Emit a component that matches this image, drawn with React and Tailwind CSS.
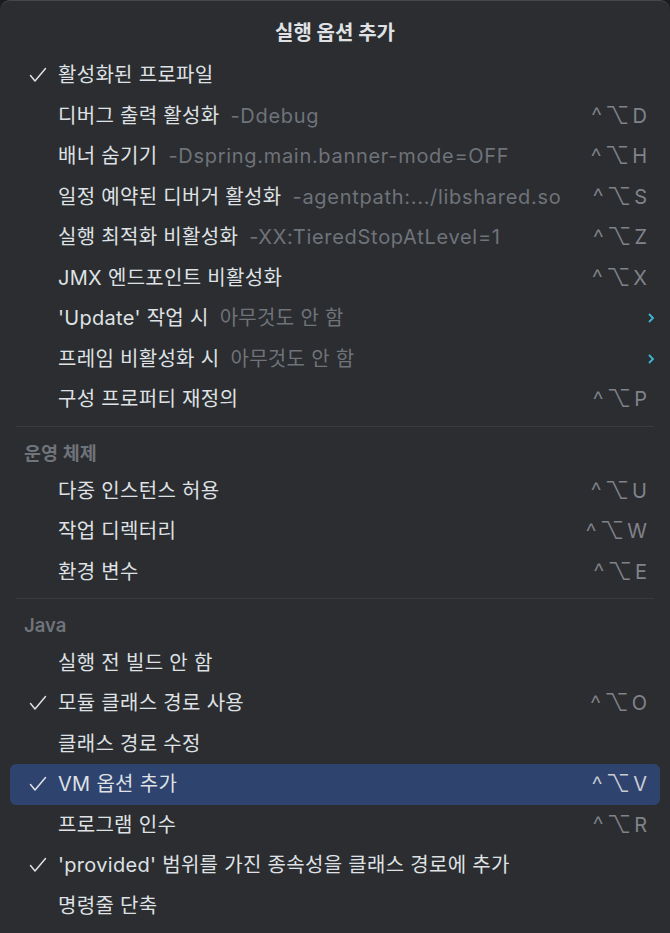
import React from "react";

const GROUPS = [
  {
    header: null,
    items: [
      { label: "활성화된 프로파일", checked: true },
      { label: "디버그 출력 활성화", hint: "-Ddebug", key: "D" },
      { label: "배너 숨기기", hint: "-Dspring.main.banner-mode=OFF", key: "H" },
      { label: "일정 예약된 디버거 활성화", hint: "-agentpath:.../libshared.so", key: "S" },
      { label: "실행 최적화 비활성화", hint: "-XX:TieredStopAtLevel=1", key: "Z" },
      { label: "JMX 엔드포인트 비활성화", key: "X" },
      { label: "'Update' 작업 시", hint: "아무것도 안 함", submenu: true },
      { label: "프레임 비활성화 시", hint: "아무것도 안 함", submenu: true },
      { label: "구성 프로퍼티 재정의", key: "P" },
    ],
  },
  {
    header: "운영 체제",
    items: [
      { label: "다중 인스턴스 허용", key: "U" },
      { label: "작업 디렉터리", key: "W" },
      { label: "환경 변수", key: "E" },
    ],
  },
  {
    header: "Java",
    items: [
      { label: "실행 전 빌드 안 함" },
      { label: "모듈 클래스 경로 사용", checked: true, key: "O" },
      { label: "클래스 경로 수정" },
      { label: "VM 옵션 추가", checked: true, key: "V", active: true },
      { label: "프로그램 인수", key: "R" },
      { label: "'provided' 범위를 가진 종속성을 클래스 경로에 추가", checked: true },
      { label: "명령줄 단축" },
    ],
  },
];

function Check() {
  return (
    <svg width="18" height="18" viewBox="0 0 18 18">
      <path d="M1.5 9.5l4.5 5.5L16.5 2.5" fill="none" stroke="#dfe1e5" strokeWidth="1.5" strokeLinecap="round" strokeLinejoin="round" />
    </svg>
  );
}

function Row({ item }) {
  const latinHint = item.hint && item.hint.startsWith("-");
  return (
    <div
      className={`h-[40.5px] mx-[10px] pl-[19px] pr-[13px] flex items-center rounded-[6px] ${
        item.active ? "bg-[#2e436e]" : ""
      }`}
    >
      <span className="w-[29px] flex items-center">{item.checked && <Check />}</span>
      <span className="text-[20px] tracking-[0.3px] text-[#dfe1e5] whitespace-nowrap">{item.label}</span>
      {item.hint && (
        <span
          className={`ml-[11px] text-[20px] text-[#6f737a] whitespace-nowrap ${
            latinHint ? "tracking-[0.7px]" : "tracking-[0.3px]"
          }`}
        >
          {item.hint}
        </span>
      )}
      <span className="flex-1" />
      {item.key && (
        <span
          className={`flex items-center gap-[3px] whitespace-nowrap leading-none ${
            item.active ? "text-[#c9ccd3]" : "text-[#80838a]"
          }`}
        >
          <span className="text-[25px] font-light mt-[2px]">^</span>
          <span className="text-[24px] font-light">⌥</span>
          <span className="text-[20px]">{item.key}</span>
        </span>
      )}
      {item.submenu && (
        <svg width="9" height="14" viewBox="0 0 9 14" className="mr-[-9px]">
          <path d="M2 3l4 4-4 4" fill="none" stroke="#3fb8d4" strokeWidth="1.8" />
        </svg>
      )}
    </div>
  );
}

export default function App() {
  return (
    <div className="w-[670px] h-[933px] bg-[#1b1c1e] overflow-hidden" style={{ fontFamily: '"Inter", "Noto Sans CJK KR", sans-serif' }}>
      <div className="h-full bg-[#2b2d30] rounded-t-[10px] border-t border-[#45474b]">
        <div className="h-[54px] flex items-center justify-center pt-[10px]">
          <span className="text-[20px] font-bold text-[#dfe1e5]">실행 옵션 추가</span>
        </div>
        {GROUPS.map((g, gi) => (
          <div key={gi}>
            {g.header && (
              <div className="h-[36.75px] pt-[3px] px-[24px] flex items-center">
                <span className="text-[18.5px] font-semibold text-[#6f737a]">{g.header}</span>
              </div>
            )}
            {g.items.map((it, i) => (
              <Row key={i} item={it} />
            ))}
            <div className="my-[6.5px] mx-[16px] h-px bg-[#393b40]" />
          </div>
        ))}
      </div>
    </div>
  );
}
